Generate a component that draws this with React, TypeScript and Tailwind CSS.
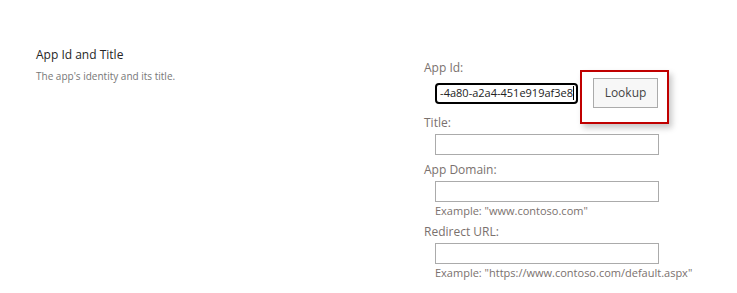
import React from "react";

const font = { fontFamily: '"Open Sans", "Noto Sans", Arial, sans-serif' };

function Label({ children, className = "" }: { children: React.ReactNode; className?: string }) {
  return <div className={`text-[12px] leading-[16px] text-[#7a716e] ${className}`}>{children}</div>;
}

export default function App() {
  return (
    <div className="w-[737px] h-[293px] bg-white flex" style={font}>
      <div className="w-[424px] pl-[36px] pt-[46px] flex flex-col">
        <div className="text-[12px] leading-[18px] text-[#262626]">App Id and Title</div>
        <div className="mt-[5px] text-[10px] leading-[14px] text-[#777]">The app's identity and its title.</div>
      </div>
      <div className="flex flex-col pt-[60px]">
        <Label>App Id:</Label>
        <div className="mt-[2px] ml-[11px] flex items-center">
          <div className="w-[143px] h-[21px] border-2 border-black rounded-[4px] overflow-hidden flex items-center justify-end pr-[2px]">
            <span className="text-[11px] leading-[16px] text-[#222] whitespace-nowrap">-4a80-a2a4-451e919af3e8</span>
            <span className="w-px h-[14px] bg-black" />
          </div>
          <div className="relative ml-[15px]">
            <button className="w-[65px] h-[30px] border border-[#ababab] bg-[#f7f7f7] text-[12px] text-[#444]">Lookup</button>
            <div className="absolute left-[-13px] top-[-8px] w-[89px] h-[54px] border-2 border-[#c00000] shadow-[3px_4px_6px_rgba(0,0,0,0.22)]" />
          </div>
        </div>
        <Label className="mt-[7px]">Title:</Label>
        <div className="ml-[11px] mt-[3px] w-[224px] h-[21px] border border-[#ababab]" />
        <Label className="mt-[7px]">App Domain:</Label>
        <div className="ml-[11px] mt-[3px] w-[224px] h-[21px] border border-[#ababab]" />
        <div className="ml-[11px] mt-[1px] text-[11px] leading-[15px] text-[#7a716e]">Example: "www.contoso.com"</div>
        <Label className="mt-[6px]">Redirect URL:</Label>
        <div className="ml-[11px] mt-[3px] w-[224px] h-[21px] border border-[#ababab]" />
        <div className="ml-[11px] mt-[1px] text-[11px] leading-[15px] text-[#7a716e]">Example: "https://www.contoso.com/default.aspx"</div>
      </div>
    </div>
  );
}
